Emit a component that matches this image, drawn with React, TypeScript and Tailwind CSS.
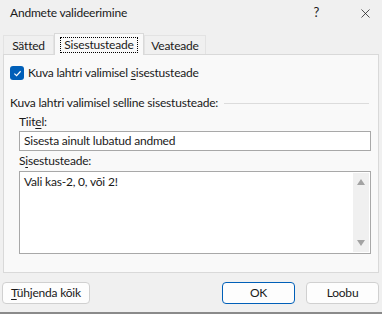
import { X } from 'lucide-react';

function Tab({ label, active, width }: { label: string; active?: boolean; width: string }) {
  if (active) {
    return (
      <div className={`relative z-10 -mb-px flex h-[22px] items-center justify-center border border-b-0 border-[#d9d9d9] bg-[#f9f9f9] ${width}`}>
        <span className="border border-dotted border-black px-[3px] leading-[14px]">{label}</span>
      </div>
    );
  }
  return (
    <div className={`flex h-[19px] items-center justify-center border border-b-0 border-[#e3e3e3] bg-[#f0f0f0] pt-px ${width}`}>
      {label}
    </div>
  );
}

function Button({ children, primary, className = '' }: { children: React.ReactNode; primary?: boolean; className?: string }) {
  return (
    <button
      className={`flex h-[22px] items-center justify-center rounded-[4px] border bg-[#fdfdfd] text-[12px] text-[#1a1a1a] ${
        primary ? 'border-[#005fb8]' : 'border-[#d0d0d0]'
      } ${className}`}
    >
      {children}
    </button>
  );
}

export default function App() {
  return (
    <div
      className="flex h-[314px] w-[382px] flex-col overflow-hidden bg-[#f0f0f0] text-[12px] tracking-[-0.2px] text-[#1a1a1a]"
      style={{ fontFamily: 'Lato, "Noto Sans", sans-serif' }}
    >
      {/* title bar */}
      <div className="flex h-[26px] items-center pl-[10px]">
        <span className="flex-1">Andmete valideerimine</span>
        <span className="mr-[39px] text-[13px]">?</span>
        <X className="mr-[9px] h-[15px] w-[15px]" strokeWidth={1.2} />
      </div>

      {/* tabs */}
      <div className="mt-[7px] flex items-end pl-[3px]">
        <Tab label="Sätted" width="w-[51px]" />
        <Tab label="Sisestusteade" active width="w-[90px]" />
        <Tab label="Veateade" width="w-[62px]" />
      </div>

      {/* panel */}
      <div className="mx-[3px] flex h-[219px] flex-col border border-[#d9d9d9] bg-[#f9f9f9] px-[6px]">
        <label className="mt-[9px] flex items-center gap-[4px]">
          <span className="flex h-[14px] w-[14px] items-center justify-center rounded-[3px] bg-[#005fb8]">
            <svg viewBox="0 0 10 10" className="h-[9px] w-[9px]" fill="none" stroke="white" strokeWidth="1.3">
              <path d="M1.5 5.2 L4 7.5 L8.5 2.5" />
            </svg>
          </span>
          <span>
            Kuva lahtri valimisel <span className="underline underline-offset-2">s</span>isestusteade
          </span>
        </label>

        <div className="mt-[12px] flex items-center">
          <span>Kuva lahtri valimisel selline sisestusteade:</span>
          <div className="ml-[6px] mr-[3px] h-px flex-1 bg-[#dcdcdc]" />
        </div>

        <div className="ml-[9px] mr-[1px] flex flex-col">
          <span className="mt-[2px] leading-[16px]">
            Tiit<span className="underline underline-offset-2">e</span>l:
          </span>
          <div className="mt-[1px] flex h-[20px] items-center border border-[#a8a8a8] bg-white px-[4px]">
            Sisesta ainult lubatud andmed
          </div>
          <span className="mt-[2px] leading-[16px]">
            S<span className="underline underline-offset-2">i</span>sestusteade:
          </span>
          <div className="mt-[2px] flex h-[83px] border border-[#a8a8a8] bg-white">
            <div className="flex-1 px-[4px] pt-[1px]">Vali kas-2, 0, või 2!</div>
            <div className="my-px mr-px flex w-[16px] flex-col items-center justify-between bg-[#f0f0f0] py-[6px]">
              <svg viewBox="0 0 8 6" className="h-[6px] w-[8px]">
                <path d="M4 0 L8 6 L0 6 Z" fill="#a3a3a3" />
              </svg>
              <svg viewBox="0 0 8 6" className="h-[6px] w-[8px]">
                <path d="M0 0 L8 0 L4 6 Z" fill="#a3a3a3" />
              </svg>
            </div>
          </div>
        </div>
      </div>

      {/* buttons */}
      <div className="mt-[9px] flex px-[2px]">
        <Button className="w-[88px]">
          <span>
            <span className="underline underline-offset-2">T</span>ühjenda kõik
          </span>
        </Button>
        <div className="flex-1" />
        <Button primary className="w-[73px]">OK</Button>
        <Button className="ml-[11px] mr-[1px] w-[73px]">Loobu</Button>
      </div>

      <div className="mt-auto h-[2px] bg-[#8a8a8a]" />
    </div>
  );
}
